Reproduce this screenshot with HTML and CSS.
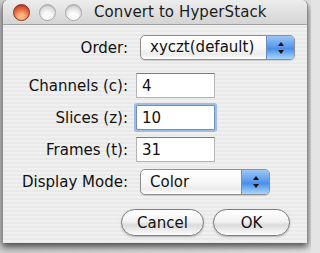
FILE: index.html
```html
<!DOCTYPE html>
<html>
<head>
<meta charset="utf-8">
<link rel="stylesheet" href="styles.css">
</head>
<body>
<div class="window">
  <div class="titlebar">
    <span class="light red"></span>
    <span class="light"></span>
    <span class="light"></span>
    <span class="title">Convert to HyperStack</span>
  </div>
  <div class="content">
    <div class="form">
      <span class="label">Order:</span>
      <div class="popup wide">
        <span class="popup-text">xyczt(default)</span>
        <span class="popup-arrows"><svg width="8" height="14" viewBox="0 0 8 14"><path d="M4 1 L7 5 L1 5 Z" fill="#111"/><path d="M4 13 L7 9 L1 9 Z" fill="#111"/></svg></span>
      </div>
      <span class="label first">Channels (c):</span>
      <div class="field first">4</div>
      <span class="label">Slices (z):</span>
      <div class="field focus">10</div>
      <span class="label">Frames (t):</span>
      <div class="field">31</div>
      <span class="label">Display Mode:</span>
      <div class="popup narrow">
        <span class="popup-text">Color</span>
        <span class="popup-arrows"><svg width="8" height="14" viewBox="0 0 8 14"><path d="M4 1 L7 5 L1 5 Z" fill="#111"/><path d="M4 13 L7 9 L1 9 Z" fill="#111"/></svg></span>
      </div>
    </div>
    <div class="buttons">
      <button class="btn cancel">Cancel</button>
      <button class="btn ok">OK</button>
    </div>
  </div>
</div>
</body>
</html>
```
FILE: styles.css
```css
html, body {
  margin: 0;
  padding: 0;
}
body {
  width: 311px;
  height: 253px;
  overflow: hidden;
  background: linear-gradient(to right, #cfcfcf, #e4e4e4);
  font-family: "DejaVu Sans", sans-serif;
  font-size: 15px;
  color: #111;
}
.window {
  margin-left: 2px;
  width: 304px;
  height: 243px;
  border-left: 1px solid #8c8c8c;
  border-right: 1px solid #8c8c8c;
  border-radius: 6px 6px 0 0;
  background: repeating-linear-gradient(to bottom, #f0f0f0 0 2px, #e9e9e9 2px 4px);
  box-shadow: 0 4px 7px rgba(0, 0, 0, 0.65);
  display: flex;
  flex-direction: column;
}
.titlebar {
  height: 25px;
  flex: none;
  display: flex;
  align-items: center;
  padding-left: 10px;
  gap: 9px;
  border-radius: 6px 6px 0 0;
  background: linear-gradient(to bottom, #ededed, #d4d4d4);
  border-bottom: 1px solid #a2a2a2;
  box-sizing: border-box;
}
.light {
  width: 17px;
  height: 17px;
  border-radius: 50%;
  box-sizing: border-box;
  border: 1px solid #a8a8a8;
  background: radial-gradient(circle at 50% 78%, #fafafa 0 30%, #dadada 70%, #c6c6c6 100%);
  box-shadow: inset 0 1px 1px rgba(0, 0, 0, 0.12);
}
.light.red {
  border-color: #8e3422;
  background: radial-gradient(circle at 50% 80%, #fdb57c 0 20%, #e56a44 55%, #a8301e 100%);
}
.title {
  margin-left: 3px;
  color: #1c1c1c;
  letter-spacing: 0.1px;
}
.content {
  flex: 1;
  display: flex;
  flex-direction: column;
  padding-top: 10px;
}
.form {
  display: grid;
  grid-template-columns: 125px auto;
  column-gap: 8px;
  row-gap: 7px;
  align-items: center;
  justify-items: start;
}
.label {
  justify-self: end;
  color: #111;
}
.label.first, .field.first {
  margin-top: 6px;
}
.popup {
  margin-left: 4px;
  height: 25px;
  box-sizing: border-box;
  border: 1px solid #8f8f8f;
  border-radius: 5px;
  background: linear-gradient(to bottom, #ffffff 0%, #f8f8f8 50%, #ececec 80%, #ffffff 100%);
  display: flex;
  box-shadow: 0 1px 1px rgba(0, 0, 0, 0.15);
}
.popup.wide { width: 155px; }
.popup.narrow { width: 130px; height: 26px; }
.popup-text {
  flex: 1;
  padding-left: 9px;
  padding-bottom: 1px;
  display: flex;
  align-items: center;
  color: #111;
}
.popup-arrows {
  width: 27px;
  flex: none;
  border-left: 1px solid #6b8fbf;
  border-radius: 0 4px 4px 0;
  background: linear-gradient(to bottom, #9cc6f5 0%, #5d9ced 45%, #4a8ee8 55%, #a8d6fd 100%);
  display: flex;
  align-items: center;
  justify-content: center;
}
.field {
  width: 79px;
  height: 25px;
  box-sizing: border-box;
  background: #fff;
  border: 1px solid #b4b4b4;
  border-top-color: #7c7c7c;
  padding-left: 5px;
  display: flex;
  align-items: center;
  color: #111;
}
.field.focus {
  border-color: #6f8fb8;
  box-shadow: 0 0 0 2px #9dbde3;
  border-radius: 1px;
}
.buttons {
  display: flex;
  justify-content: flex-end;
  gap: 9px;
  margin-top: 14px;
  padding-right: 17px;
}
.btn {
  height: 27px;
  border-radius: 14px;
  border: 1px solid #7a7a7a;
  background: linear-gradient(to bottom, #ffffff 0%, #f3f3f3 45%, #dcdcdc 60%, #f4f4f4 90%, #ffffff 100%);
  font-family: "DejaVu Sans", sans-serif;
  font-size: 15px;
  color: #111;
  padding: 0;
  box-shadow: 0 1px 2px rgba(0, 0, 0, 0.25);
}
.cancel { width: 83px; }
.ok { width: 77px; }
```
